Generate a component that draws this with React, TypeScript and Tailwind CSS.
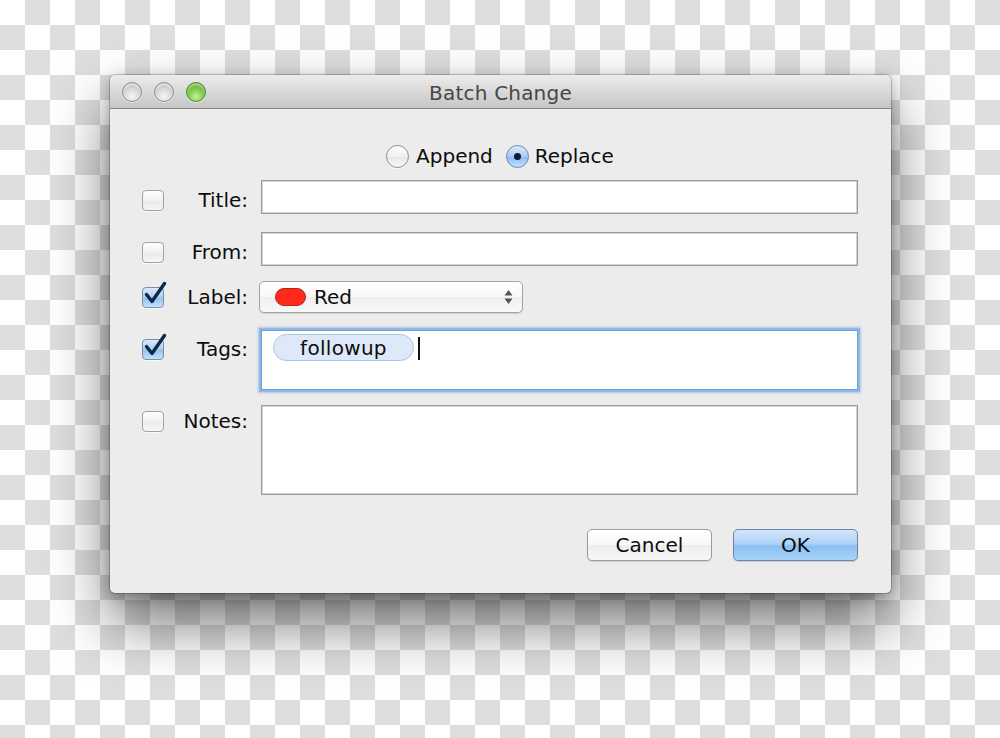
import React from "react";

function Light({ green }: { green?: boolean }) {
  return green ? (
    <div className="w-[20px] h-[20px] rounded-full border border-[#4d8a2a] bg-[radial-gradient(circle_at_50%_75%,#c4f59a_0%,#7fcb4c_45%,#4f9a25_100%)] shadow-[inset_0_2px_2px_rgba(255,255,255,0.5),0_1px_0_rgba(255,255,255,0.6)]" />
  ) : (
    <div className="w-[20px] h-[20px] rounded-full border border-[#8d8d8d] bg-[radial-gradient(circle_at_50%_75%,#f6f6f6_0%,#d6d6d6_50%,#a9a9a9_100%)] shadow-[inset_0_2px_2px_rgba(255,255,255,0.6),0_1px_0_rgba(255,255,255,0.6)]" />
  );
}

function CheckBox({ checked }: { checked?: boolean }) {
  return (
    <div className="relative w-[22px] h-[21px] shrink-0">
      <div
        className={
          checked
            ? "w-[22px] h-[21px] rounded-[4px] border border-[#7b8ea8] bg-[linear-gradient(#dcebfb,#a9cdf3_50%,#8cc0f2_51%,#c4e2fc)] shadow-[0_1px_0_rgba(255,255,255,0.7)]"
            : "w-[22px] h-[21px] rounded-[4px] border border-[#a2a2a2] bg-[linear-gradient(#ffffff,#f1f1f1_50%,#e9e9e9_51%,#f7f7f7)] shadow-[0_1px_0_rgba(255,255,255,0.7)]"
        }
      />
      {checked && (
        <svg className="absolute left-[1px] top-[-6px]" width="26" height="26" viewBox="0 0 26 26">
          <path d="M3.5 13.5 L9 20.5 L21.5 2.5" fill="none" stroke="#11284a" strokeWidth="3.4" strokeLinecap="round" strokeLinejoin="round" />
        </svg>
      )}
    </div>
  );
}

function Label({ text }: { text: string }) {
  return <div className="w-[84px] shrink-0 text-right text-[20px] leading-[24px] text-[#0d0d0d]">{text}</div>;
}

function TextField({ h }: { h: string }) {
  return (
    <div className={`ml-[13px] flex-1 ${h} bg-white border border-[#9b9b9b] shadow-[inset_0_0_0_1px_#d4d4d4]`} />
  );
}

export default function App() {
  return (
    <div className="w-[1000px] h-[738px] overflow-hidden bg-[conic-gradient(#dedede_25%,#ffffff_0_50%,#dedede_0_75%,#ffffff_0)] bg-[length:50px_50px] pt-[75px] pl-[110px] font-['DejaVu_Sans',sans-serif]">
      <div className="w-[781px] h-[518px] rounded-[5px] bg-[#ececec] shadow-[0_30px_60px_rgba(0,0,0,0.55),0_4px_14px_rgba(0,0,0,0.25),0_0_0_1px_rgba(0,0,0,0.2)] flex flex-col">
        {/* title bar */}
        <div className="h-[34px] shrink-0 rounded-t-[5px] bg-[linear-gradient(#ececec,#d9d9d9_50%,#c6c6c6)] border-b border-[#868686] grid grid-cols-[1fr_auto_1fr] items-center">
          <div className="flex items-center gap-[12px] pl-[12px] pt-[1px]">
            <Light />
            <Light />
            <Light green />
          </div>
          <div className="text-[20px] leading-[24px] text-[#464646] tracking-[0.2px] pt-[2px]">Batch Change</div>
          <div />
        </div>

        <div className="flex flex-col pl-[32px] pr-[33px]">
          {/* radios */}
          <div className="mt-[35px] h-[24px] flex items-center justify-center text-[20px] text-[#0d0d0d]">
            <div className="w-[23px] h-[23px] rounded-full border border-[#8e8e8e] bg-[linear-gradient(#ffffff,#f0f0f0_50%,#e6e6e6_51%,#fafafa)] shadow-[0_1px_0_rgba(255,255,255,0.7)]" />
            <span className="ml-[7px] leading-[24px]">Append</span>
            <div className="ml-[13px] w-[23px] h-[23px] rounded-full border border-[#6e87aa] bg-[linear-gradient(#dbeafb,#a8ccf3_50%,#86bcf1_51%,#c3e1fc)] flex items-center justify-center">
              <div className="w-[7px] h-[7px] rounded-full bg-[#111c2e]" />
            </div>
            <span className="ml-[6px] leading-[24px]">Replace</span>
          </div>

          {/* Title */}
          <div className="mt-[12px] h-[34px] flex items-center">
            <div className="flex items-center pt-[6px]">
              <CheckBox />
              <Label text="Title:" />
            </div>
            <TextField h="h-[34px]" />
          </div>

          {/* From */}
          <div className="mt-[18px] h-[34px] flex items-center">
            <div className="flex items-center pt-[6px]">
              <CheckBox />
              <Label text="From:" />
            </div>
            <TextField h="h-[34px]" />
          </div>

          {/* Label */}
          <div className="mt-[15px] h-[32px] flex items-center">
            <CheckBox checked />
            <Label text="Label:" />
            <div className="ml-[11px] w-[264px] h-[32px] rounded-[5px] border border-[#a3a3a3] bg-[linear-gradient(#ffffff,#f7f7f7_50%,#efefef_51%,#f8f8f8)] shadow-[0_1px_1px_rgba(0,0,0,0.12)] flex items-center pl-[15px] pr-[9px]">
              <div className="w-[31px] h-[18px] rounded-full bg-[#ff2a1c] border border-[#b3261c]" />
              <span className="ml-[8px] text-[20px] leading-[24px] text-[#0d0d0d]">Red</span>
              <div className="flex-1" />
              <svg width="9" height="16" viewBox="0 0 9 16">
                <path d="M4.5 1 L8.5 6.5 L0.5 6.5 Z" fill="#555" />
                <path d="M4.5 15 L8.5 9.5 L0.5 9.5 Z" fill="#555" />
              </svg>
            </div>
          </div>

          {/* Tags */}
          <div className="mt-[17px] h-[60px] flex items-start">
            <div className="mt-[9px]">
              <CheckBox checked />
            </div>
            <div className="mt-[7px]">
              <Label text="Tags:" />
            </div>
            <div className="ml-[13px] flex-1 h-[60px] bg-white border border-[#6f9fd6] shadow-[0_0_0_2px_#8fb8e6,0_0_2px_3px_rgba(120,165,220,0.5)] flex items-start pl-[11px] pt-[3px]">
              <div className="w-[141px] h-[27px] rounded-full bg-[#dde8f8] border border-[#aac3ea] flex items-center justify-center text-[20px] leading-[24px] text-[#0d0d0d] tracking-[0.3px]">
                followup
              </div>
              <div className="ml-[4px] mt-[3px] w-[2px] h-[23px] bg-[#111]" />
            </div>
          </div>

          {/* Notes */}
          <div className="mt-[15px] h-[90px] flex items-start">
            <div className="mt-[6px]">
              <CheckBox />
            </div>
            <div className="mt-[4px]">
              <Label text="Notes:" />
            </div>
            <TextField h="h-[90px]" />
          </div>

          {/* Buttons */}
          <div className="mt-[34px] h-[32px] flex justify-end gap-[21px]">
            <div className="w-[125px] h-[32px] rounded-[5px] border border-[#9c9c9c] bg-[linear-gradient(#ffffff,#f8f8f8_50%,#ededed_51%,#f7f7f7)] shadow-[0_1px_1px_rgba(0,0,0,0.12)] flex items-center justify-center text-[20px] leading-[24px] text-[#0d0d0d]">
              Cancel
            </div>
            <div className="w-[125px] h-[32px] rounded-[5px] border border-[#6f86a8] bg-[linear-gradient(#d3e6fb,#add2f7_45%,#8dc0f2_55%,#a8d4fb)] shadow-[0_1px_1px_rgba(0,0,0,0.15)] flex items-center justify-center text-[20px] leading-[24px] text-[#0d0d0d]">
              OK
            </div>
          </div>
        </div>
      </div>
    </div>
  );
}
